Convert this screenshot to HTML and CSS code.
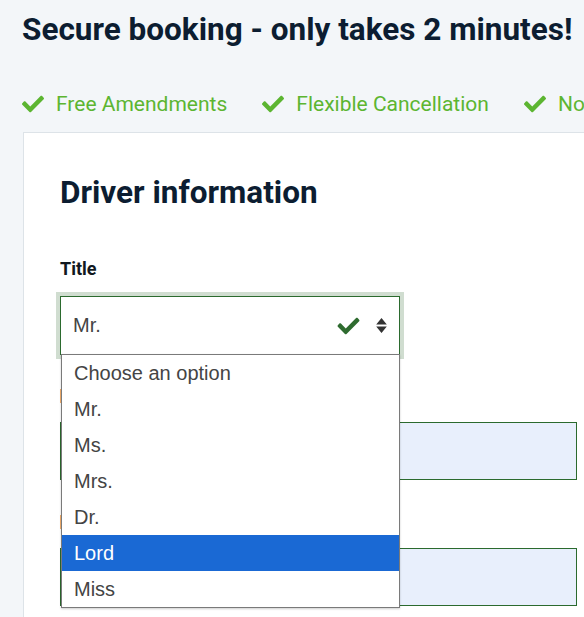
FILE: index.html
```html
<!DOCTYPE html>
<html lang="en">
<head>
<meta charset="utf-8">
<title>Secure booking</title>
<link rel="stylesheet" href="styles.css">
</head>
<body>
<div class="page">
  <h1 class="page-title">Secure booking - only takes 2 minutes!</h1>
  <ul class="perks">
    <li class="perk"><svg class="perk-icon" viewBox="0 0 512 512"><path d="M173.898 439.404l-166.4-166.4c-9.997-9.997-9.997-26.206 0-36.204l36.203-36.204c9.997-9.998 26.207-9.998 36.204 0L192 312.69 432.095 72.596c9.997-9.997 26.207-9.997 36.204 0l36.203 36.204c9.997 9.997 9.997 26.206 0 36.204l-294.4 294.401c-9.998 9.997-26.207 9.997-36.204-.001z"/></svg>Free Amendments</li>
    <li class="perk"><svg class="perk-icon" viewBox="0 0 512 512"><path d="M173.898 439.404l-166.4-166.4c-9.997-9.997-9.997-26.206 0-36.204l36.203-36.204c9.997-9.998 26.207-9.998 36.204 0L192 312.69 432.095 72.596c9.997-9.997 26.207-9.997 36.204 0l36.203 36.204c9.997 9.997 9.997 26.206 0 36.204l-294.4 294.401c-9.998 9.997-26.207 9.997-36.204-.001z"/></svg>Flexible Cancellation</li>
    <li class="perk"><svg class="perk-icon" viewBox="0 0 512 512"><path d="M173.898 439.404l-166.4-166.4c-9.997-9.997-9.997-26.206 0-36.204l36.203-36.204c9.997-9.998 26.207-9.998 36.204 0L192 312.69 432.095 72.596c9.997-9.997 26.207-9.997 36.204 0l36.203 36.204c9.997 9.997 9.997 26.206 0 36.204l-294.4 294.401c-9.998 9.997-26.207 9.997-36.204-.001z"/></svg>No Hidden Fees</li>
  </ul>
  <section class="card">
    <h2 class="card-title">Driver information</h2>
    <div class="field">
      <label class="label">Title</label>
      <div class="select-wrap">
        <div class="select">
          <span class="select-value">Mr.</span>
          <svg class="select-check" viewBox="0 0 512 512"><path d="M173.898 439.404l-166.4-166.4c-9.997-9.997-9.997-26.206 0-36.204l36.203-36.204c9.997-9.998 26.207-9.998 36.204 0L192 312.69 432.095 72.596c9.997-9.997 26.207-9.997 36.204 0l36.203 36.204c9.997 9.997 9.997 26.206 0 36.204l-294.4 294.401c-9.998 9.997-26.207 9.997-36.204-.001z"/></svg>
          <svg class="select-arrows" viewBox="0 0 10 16"><path d="M5 1 L10 7 H0 Z M0 9 H10 L5 15 Z"/></svg>
        </div>
        <ul class="dropdown">
          <li class="option">Choose an option</li>
          <li class="option">Mr.</li>
          <li class="option">Ms.</li>
          <li class="option">Mrs.</li>
          <li class="option">Dr.</li>
          <li class="option option-active">Lord</li>
          <li class="option">Miss</li>
        </ul>
      </div>
    </div>
    <div class="field">
      <div class="label-slot"><span class="label-mark"></span></div>
      <div class="input"></div>
    </div>
    <div class="field">
      <div class="label-slot"><span class="label-mark"></span></div>
      <div class="input"></div>
    </div>
  </section>
</div>
</body>
</html>
```

FILE: styles.css
```css
html, body {
  margin: 0;
  padding: 0;
}
body {
  background: #f3f6f9;
  font-family: Roboto, "Liberation Sans", sans-serif;
  overflow: hidden;
  width: 584px;
  height: 617px;
}
.page {
  padding: 12px 0 0 23px;
  width: 900px;
}
.page-title {
  margin: 0;
  font-size: 31.5px;
  line-height: 36px;
  font-weight: 700;
  color: #0c1d31;
  margin-left: -1px;
}
.perks {
  list-style: none;
  margin: 44px 0 0 -1px;
  padding: 0;
  display: flex;
  gap: 35px;
  height: 40px;
  white-space: nowrap;
}
.perk {
  display: flex;
  align-items: center;
  gap: 12px;
  font-size: 21px;
  line-height: 24px;
  color: #5cb531;
  height: 24px;
}
.perk-icon {
  width: 22px;
  height: 22px;
  fill: #5cb531;
}
.card {
  background: #fff;
  border: 1px solid #dde3e8;
  border-right: none;
  padding: 40px 0 0 36px;
  height: 600px;
}
.card-title {
  margin: 0;
  font-size: 31.5px;
  line-height: 40px;
  font-weight: 700;
  color: #0c1d31;
}
.card-title + .field {
  margin-top: 44px;
}
.label {
  display: block;
  font-size: 18px;
  line-height: 24px;
  font-weight: 700;
  color: #111820;
  margin-bottom: 15px;
}
.label-slot {
  height: 24px;
  margin-bottom: 15px;
  display: flex;
  align-items: center;
}
.label-mark {
  display: block;
  width: 2px;
  height: 14px;
  margin-top: 2px;
  background: #f7b26e;
}
.select-wrap {
  position: relative;
  width: 340px;
  margin-bottom: 28px;
}
.select {
  box-sizing: border-box;
  height: 59px;
  border: 1px solid #2b6a2e;
  box-shadow: 0 0 0 4px #d0ddd0;
  background: #fff;
  display: flex;
  align-items: center;
  padding: 0 12px 0 12px;
}
.select-value {
  flex: 1;
  font-family: "Liberation Sans", Arial, sans-serif;
  font-size: 20px;
  color: #444;
}
.select-check {
  width: 25px;
  height: 22px;
  fill: #2e6b2f;
  margin-right: 15px;
}
.select-arrows {
  width: 11px;
  height: 17px;
  fill: #333;
}
.dropdown {
  position: absolute;
  top: 58px;
  left: 1px;
  width: 339px;
  box-sizing: border-box;
  margin: 0;
  padding: 0;
  list-style: none;
  background: #fff;
  border: 1px solid #7a7a7a;
  box-shadow: 0 1px 2px rgba(0,0,0,0.2);
  z-index: 2;
}
.option {
  height: 36px;
  line-height: 36px;
  padding-left: 12px;
  font-family: "Liberation Sans", Arial, sans-serif;
  font-size: 20px;
  color: #444;
}
.option-active {
  background: #1a69d4;
  color: #fff;
}
.input {
  box-sizing: border-box;
  width: 517px;
  height: 58px;
  background: #e8effc;
  border: 1px solid #2b6a2e;
  margin-bottom: 29px;
}
```
